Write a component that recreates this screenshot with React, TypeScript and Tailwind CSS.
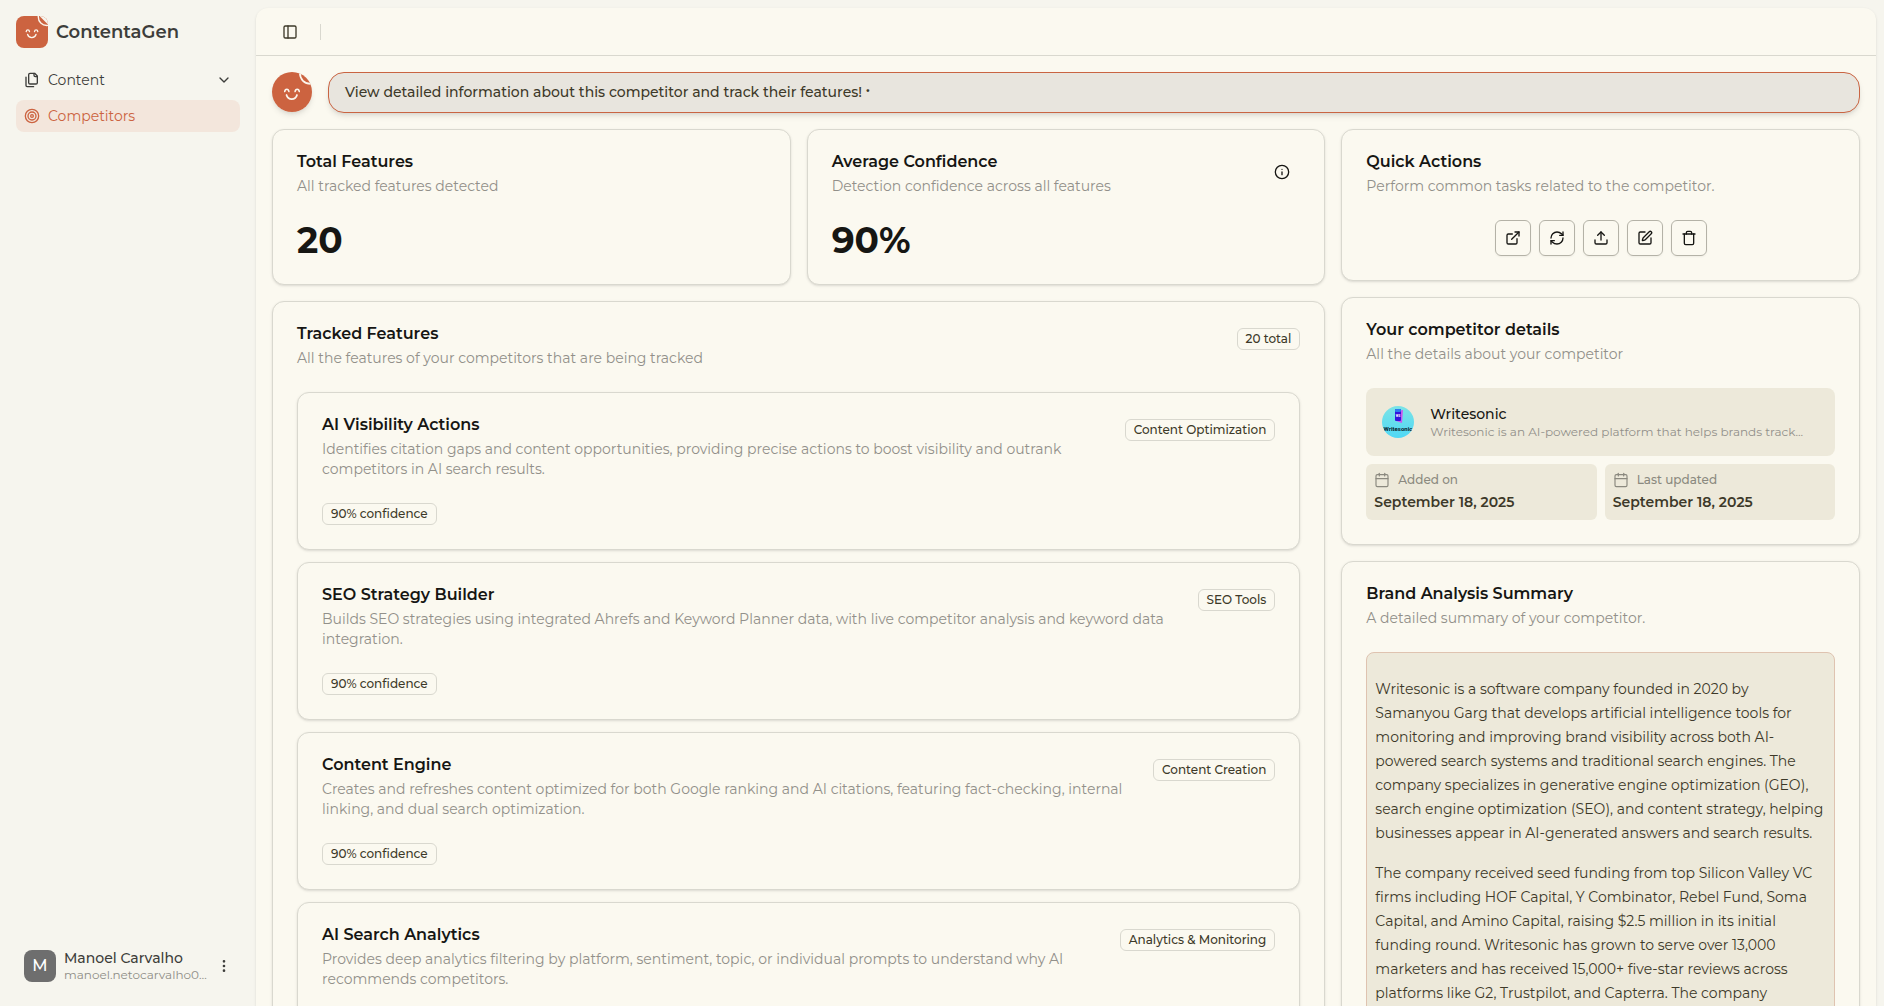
import {
  Calendar, ChevronDown, EllipsisVertical, ExternalLink, Info, PanelLeft,
  RefreshCw, SquarePen, Target, Trash, Upload,
} from "lucide-react";
import type { ReactNode } from "react";

const features = [
  {
    name: "AI Visibility Actions",
    category: "Content Optimization",
    summary:
      "Identifies citation gaps and content opportunities, providing precise actions to boost visibility and outrank competitors in AI search results.",
  },
  {
    name: "SEO Strategy Builder",
    category: "SEO Tools",
    summary:
      "Builds SEO strategies using integrated Ahrefs and Keyword Planner data, with live competitor analysis and keyword data integration.",
  },
  {
    name: "Content Engine",
    category: "Content Creation",
    summary:
      "Creates and refreshes content optimized for both Google ranking and AI citations, featuring fact-checking, internal linking, and dual search optimization.",
  },
  {
    name: "AI Search Analytics",
    category: "Analytics & Monitoring",
    summary:
      "Provides deep analytics filtering by platform, sentiment, topic, or individual prompts to understand why AI recommends competitors.",
  },
];

const actions = [
  { label: "Visit website", Icon: ExternalLink },
  { label: "Refresh", Icon: RefreshCw },
  { label: "Upload logo", Icon: Upload },
  { label: "Edit", Icon: SquarePen },
  { label: "Delete", Icon: Trash },
];

/* Smiling page with a folded top-right corner. */
function Mascot({ className }: { className: string }) {
  return (
    <svg viewBox="0 0 32 32" className={className} aria-hidden="true">
      <rect width="32" height="32" fill="#cc6340" />
      <path d="M23.5 0H32V8.5Z" fill="#f6f5ee" />
      <g fill="none" stroke="#fbf5ec" strokeLinecap="round">
        <path d="M22.3 0C22 5.6 26 10 32 9.4" strokeWidth="1.4" />
        <path d="M10.2 15.6c.3-2.4 3-2.4 3.3 0M18.5 15.6c.3-2.4 3-2.4 3.3 0" strokeWidth="1.3" />
        <path d="M11.6 18.4c1.2 4.3 7.2 4.3 8.4 0" strokeWidth="1.4" />
      </g>
    </svg>
  );
}

function FilesIcon({ className }: { className: string }) {
  return (
    <svg
      viewBox="0 0 24 24"
      className={className}
      fill="none"
      stroke="currentColor"
      strokeWidth="2"
      strokeLinecap="round"
      strokeLinejoin="round"
      aria-hidden="true"
    >
      <path d="M20 7h-3a2 2 0 0 1-2-2V2" />
      <path d="M9 18a2 2 0 0 1-2-2V4a2 2 0 0 1 2-2h7l4 4v10a2 2 0 0 1-2 2Z" />
      <path d="M3 7.6v12.8A1.6 1.6 0 0 0 4.6 22h9.8" />
    </svg>
  );
}

function WritesonicLogo() {
  return (
    <svg viewBox="0 0 32 32" className="size-8 shrink-0 rounded-full" role="img" aria-label="Writesonic logo">
      <defs>
        <linearGradient id="ws-bg" x1="0" y1="0" x2="0" y2="1">
          <stop offset="0" stopColor="#7ce3e6" />
          <stop offset="1" stopColor="#4fd8f5" />
        </linearGradient>
      </defs>
      <rect width="32" height="32" fill="url(#ws-bg)" />
      <path d="M15 5l6-1-1 13-6-2z" fill="#c65cf2" />
      <rect x="13" y="3" width="6" height="12" rx="1" fill="#3414dc" />
      <rect x="13" y="3" width="6" height="3" rx="1" fill="#2a7bf0" />
      <text x="16" y="11" textAnchor="middle" className="font-['Roboto',sans-serif] text-[3px] font-bold" fill="#fff">WS</text>
      <text x="16" y="25" textAnchor="middle" className="font-['Roboto',sans-serif] text-[6px] font-bold" fill="#06202a">Writesonic</text>
    </svg>
  );
}

function Card({ title, description, action, children }: {
  title: string; description: string; action?: ReactNode; children: ReactNode;
}) {
  return (
    <section className="flex flex-col gap-6 rounded-xl border border-[#d9d8cf] bg-[#fbf9f0] py-6 shadow-sm">
      <header className="flex items-start justify-between gap-4 px-6">
        <div className="flex flex-col gap-1.5">
          <h2 className="text-base leading-4 font-semibold text-[#161613]">{title}</h2>
          <p className="text-sm text-[#92908a]">{description}</p>
        </div>
        {action}
      </header>
      <div className="px-6">{children}</div>
    </section>
  );
}

function Badge({ children }: { children: ReactNode }) {
  return (
    <span className="flex shrink-0 rounded-md border border-[#d9d8cf] px-2 py-0.5 text-xs font-medium whitespace-nowrap text-[#3d3929]">
      {children}
    </span>
  );
}

function HeaderBadge({ children }: { children: ReactNode }) {
  return (
    <div className="pt-0.5">
      <Badge>{children}</Badge>
    </div>
  );
}

function DateTile({ label, value }: { label: string; value: string }) {
  return (
    <div className="flex flex-col gap-1 rounded-md bg-[#ede9da] p-2">
      <div className="flex items-center gap-2 text-xs font-medium text-[#8b897f]">
        <Calendar className="size-4" strokeWidth={1.75} />
        {label}
      </div>
      <p className="text-sm font-semibold text-[#3d3929]">{value}</p>
    </div>
  );
}

export default function App() {
  return (
    <div className="flex h-screen overflow-hidden bg-[#f6f5ee] font-['Montserrat','Inter',sans-serif] text-[#3d3d3a]">
      <aside className="flex w-64 shrink-0 flex-col px-4 pt-4 pb-[23px]">
        <a href="#" className="flex items-center gap-2">
          <Mascot className="size-8 rounded-lg" />
          <span className="text-lg leading-8 font-semibold">ContentaGen</span>
        </a>
        <nav className="mt-4 flex flex-col gap-1 text-sm">
          <button type="button" className="flex h-8 items-center gap-2 rounded-lg px-2">
            <FilesIcon className="size-4" />
            Content
            <ChevronDown className="ml-auto size-4" />
          </button>
          <a href="#" className="flex h-8 items-center gap-2 rounded-lg bg-[#f3e6dc] px-2 text-[#cc6340]">
            <Target className="size-4" />
            Competitors
          </a>
        </nav>
        <button type="button" className="mt-auto flex items-center gap-2 px-2 text-left">
          <span className="flex size-8 items-center justify-center rounded-lg bg-[#6e6e6e] text-base font-medium text-white">M</span>
          <span className="flex min-w-0 flex-1 flex-col">
            <span className="truncate text-sm leading-[18px] font-medium">Manoel Carvalho</span>
            <span className="truncate text-xs text-[#8f8e87]">manoel.netocarvalho0@gmail.com</span>
          </span>
          <EllipsisVertical className="size-4 shrink-0" />
        </button>
      </aside>

      <main className="mt-2 mr-2 min-w-0 flex-1 overflow-hidden rounded-t-xl bg-[#fbf9f0] shadow-sm">
        <div className="flex h-12 items-center gap-3 border-b border-[#d9d8cf] px-4">
          <button type="button" aria-label="Toggle sidebar" className="flex size-9 items-center justify-center text-[#3d3929]">
            <PanelLeft className="size-4" />
          </button>
          <div className="h-4 w-px bg-[#d9d8cf]" />
        </div>

        <div className="flex flex-col gap-4 p-4">
          <div className="flex items-start gap-4">
            <Mascot className="size-10 shrink-0 rounded-full shadow-md" />
            <p className="flex-1 rounded-2xl border border-[#c96442] bg-[#e8e5de] px-4 py-2.5 text-sm leading-[19px] font-medium text-[#3d3929] shadow-md">
              View detailed information about this competitor and track their features!{" "}
              <span className="align-text-top text-sm leading-none font-bold">·</span>
            </p>
          </div>

          <div className="grid grid-cols-3 items-start gap-4">
            <div className="col-span-2 grid grid-cols-2 gap-4">
              <Card title="Total Features" description="All tracked features detected">
                <p className="text-4xl font-bold text-[#161613]">20</p>
              </Card>
              <Card
                title="Average Confidence"
                description="Detection confidence across all features"
                action={
                  <button type="button" aria-label="About confidence" className="flex size-9 items-center justify-center text-[#161613]">
                    <Info className="size-4" />
                  </button>
                }
              >
                <p className="text-4xl font-bold text-[#161613]">90%</p>
              </Card>
              <div className="col-span-2">
                <Card
                  title="Tracked Features"
                  description="All the features of your competitors that are being tracked"
                  action={<HeaderBadge>20 total</HeaderBadge>}
                >
                  <div className="flex flex-col gap-3">
                    {features.map((f) => (
                      <Card key={f.name} title={f.name} description={f.summary} action={<HeaderBadge>{f.category}</HeaderBadge>}>
                        <div className="flex">
                          <Badge>90% confidence</Badge>
                        </div>
                      </Card>
                    ))}
                  </div>
                </Card>
              </div>
            </div>

            <div className="flex flex-col gap-4">
              <Card title="Quick Actions" description="Perform common tasks related to the competitor.">
                <div className="flex justify-center gap-2">
                  {actions.map(({ label, Icon }) => (
                    <button
                      key={label}
                      type="button"
                      aria-label={label}
                      className="flex size-9 items-center justify-center rounded-md border border-[#b4b2a7] text-[#161613] shadow-xs"
                    >
                      <Icon className="size-4" />
                    </button>
                  ))}
                </div>
              </Card>

              <Card title="Your competitor details" description="All the details about your competitor">
                <div className="flex flex-col gap-2">
                  <div className="flex items-center gap-4 rounded-lg bg-[#ede9da] p-4">
                    <WritesonicLogo />
                    <div className="min-w-0">
                      <p className="text-sm font-medium text-[#161613]">Writesonic</p>
                      <p className="truncate text-xs text-[#92908a]">Writesonic is an AI-powered platform that helps brands track...</p>
                    </div>
                  </div>
                  <div className="grid grid-cols-2 gap-2">
                    <DateTile label="Added on" value="September 18, 2025" />
                    <DateTile label="Last updated" value="September 18, 2025" />
                  </div>
                </div>
              </Card>

              <Card title="Brand Analysis Summary" description="A detailed summary of your competitor.">
                <div className="flex flex-col gap-4 rounded-lg border border-[#dfc3b0] bg-[#ede9da] px-2 py-6 text-sm leading-6 text-[#3d3929]">
                  <p>
                    Writesonic is a software company founded in 2020 by Samanyou Garg that develops artificial
                    intelligence tools for monitoring and improving brand visibility across both AI-powered search
                    systems and traditional search engines. The company specializes in generative engine optimization
                    (GEO), search engine optimization (SEO), and content strategy, helping businesses appear in
                    AI-generated answers and search results.
                  </p>
                  <p>
                    The company received seed funding from top Silicon Valley VC firms including HOF Capital, Y
                    Combinator, Rebel Fund, Soma Capital, and Amino Capital, raising $2.5 million in its initial funding
                    round. Writesonic has grown to serve over 13,000 marketers and has received 15,000+ five-star
                    reviews across platforms like G2, Trustpilot, and Capterra. The company
                  </p>
                </div>
              </Card>
            </div>
          </div>
        </div>
      </main>
    </div>
  );
}
